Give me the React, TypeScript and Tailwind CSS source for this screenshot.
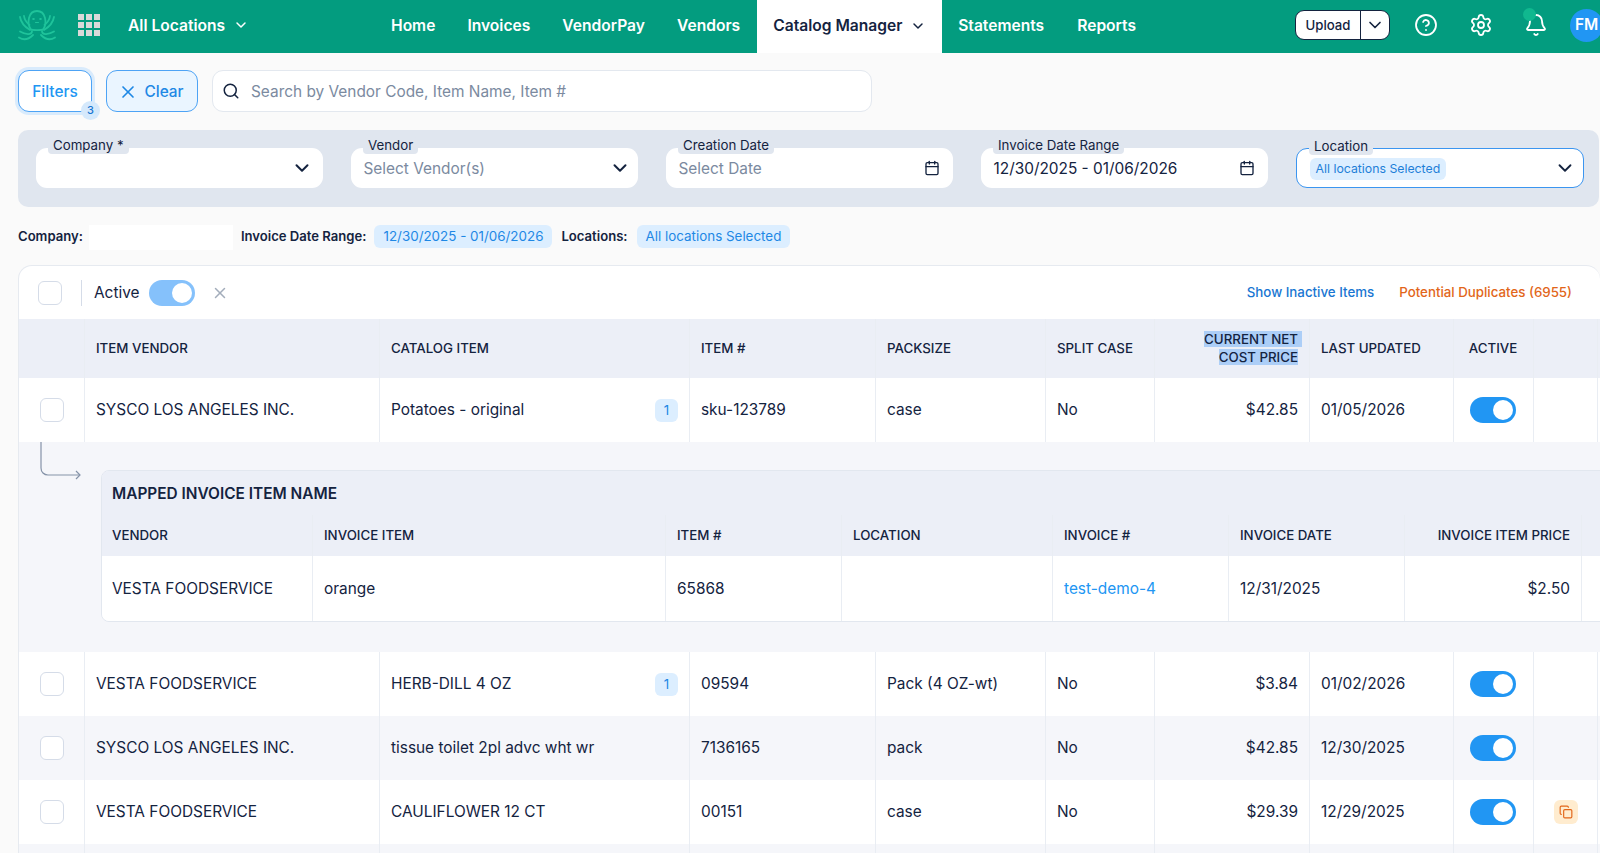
import { Bell, Calendar, ChevronDown, CircleHelp, Copy, Search, Settings, X } from "lucide-react";
import type { ReactNode } from "react";

const navItems = ["Home", "Invoices", "VendorPay", "Vendors"];
const rowGrid = "grid grid-cols-[66px_295px_310px_186px_170px_109px_155px_144px_80px_64px]";
const mappedGrid = "grid grid-cols-[211px_353px_176px_211px_176px_176px_177px_1fr]";
const cell = "flex items-center px-[11px] border-r border-[#E9EDF3]";

function Logo() {
  return (
    <svg width="40" height="32" viewBox="0 0 40 32" fill="none" stroke="#1FC39B" strokeWidth="1.8" strokeLinecap="round">
      <path d="M13.5 20C10 14 11 2 20 2C29 2 30 14 26.5 20C25 21.5 15 21.5 13.5 20Z" />
      <path d="M3 8C4 14 8 18 13 21" />
      <path d="M37 8C36 14 32 18 27 21" />
      <path d="M7 7C7.5 11 10 14 12.5 16" />
      <path d="M33 7C32.5 11 30 14 27.5 16" />
      <path d="M15 22C15 26 9 26 3 22.5" />
      <path d="M25 22C25 26 31 26 37 22.5" />
      <path d="M2 28.5C6 31 11 31 16 26" />
      <path d="M38 28.5C34 31 29 31 24 26" />
      <ellipse cx="16.5" cy="10" rx="1.3" ry="1.1" fill="#1FC39B" stroke="none" />
      <ellipse cx="23.5" cy="10" rx="1.3" ry="1.1" fill="#1FC39B" stroke="none" />
      <path d="M18.5 13.5H21.5" strokeWidth="1" />
    </svg>
  );
}

function AppGrid() {
  return (
    <div className="grid grid-cols-3 gap-[2px] w-[22px]">
      {Array.from({ length: 9 }).map((_, i) => (
        <span key={i} className="h-[6px] w-[6px] bg-[#D9D9D9]" />
      ))}
    </div>
  );
}

function TopBar() {
  return (
    <header className="flex items-center h-[53px] bg-[#039C7F] text-white overflow-hidden">
      <div className="ml-[17px] pb-[3px]">
        <Logo />
      </div>
      <div className="ml-[21px] pb-[3px]">
        <AppGrid />
      </div>
      <div className="flex items-center ml-[28px] pb-[2px] w-[247px] text-[15.6px] font-semibold">
        All Locations
        <ChevronDown size={16} strokeWidth={2.2} className="ml-[8px]" />
      </div>
      <nav className="flex items-center h-full text-[15.6px] font-semibold">
        {navItems.map((item) => (
          <span key={item} className="px-4 pb-[2px]">
            {item}
          </span>
        ))}
        <span className="flex items-center h-full w-[185px] ml-[1px] pl-4 pb-[2px] bg-white text-[#14233F]">
          Catalog Manager
          <ChevronDown size={16} strokeWidth={2.2} className="ml-[8px]" />
        </span>
        <span className="px-4 pb-[2px]">Statements</span>
        <span className="pl-[17px] pr-4 pb-[2px]">Reports</span>
      </nav>
      <div className="ml-auto flex items-center pb-[3px]">
        <div className="flex items-center h-[30px] w-[95px] bg-white border border-[#14233F] rounded-[9px] text-[#14233F]">
          <span className="w-[64px] pt-[1px] text-center text-[13.2px] font-medium">Upload</span>
          <span className="flex items-center justify-center flex-1 h-full border-l border-[#14233F]">
            <ChevronDown size={20} />
          </span>
        </div>
        <CircleHelp size={24} strokeWidth={1.8} className="ml-[24px]" />
        <Settings size={24} strokeWidth={1.8} className="ml-[31px]" />
        <div className="relative ml-[31px]">
          <Bell size={24} strokeWidth={1.8} />
          <span className="absolute -top-[5px] -left-[1px] h-[13px] w-[13px] rounded-full bg-[#10B88F]" />
        </div>
        <span className="flex items-center justify-center shrink-0 ml-[22px] -mr-[3px] h-[33px] w-[33px] rounded-full bg-[#2196F3] text-[15.4px] font-semibold">
          FM
        </span>
      </div>
    </header>
  );
}

function SearchRow() {
  return (
    <div className="flex items-center gap-[14px] pl-[18px] pt-[17px]">
      <button className="relative h-[42px] w-[74px] pt-[1px] rounded-[11px] bg-white border-[1.5px] border-[#4DA3F5] ring-[3px] ring-[#D9EBFC] text-[15.4px] font-medium text-[#2196F3]">
        Filters
        <span className="absolute -bottom-[9px] -right-[9px] flex items-center justify-center h-[19px] w-[19px] rounded-full bg-[#D5E9FC] text-[11px] text-[#1976D2]">
          3
        </span>
      </button>
      <button className="flex items-center justify-center gap-[6px] h-[42px] w-[92px] pt-[1px] pr-[2px] rounded-[11px] bg-[#EAF5FF] border-[1.5px] border-[#4DA3F5] text-[15.4px] font-medium text-[#1E88E5]">
        <X size={20} strokeWidth={2} />
        Clear
      </button>
      <div className="flex items-center gap-[11px] h-[42px] w-[660px] pl-[9px] rounded-[11px] bg-white border border-[#E3E8EF]">
        <Search size={18} className="text-[#14233F]" />
        <span className="pt-[1px] text-[15.4px] text-[#7B8AA0]">Search by Vendor Code, Item Name, Item #</span>
      </div>
    </div>
  );
}

function Field({ label, children, active }: { label: string; children: ReactNode; active?: boolean }) {
  return (
    <div
      className={`relative flex items-center justify-between h-[40px] pl-[12.5px] pr-[13px] rounded-[11px] bg-white ${
        active ? "border border-[#3B95F0]" : ""
      }`}
    >
      <span className="absolute -top-[11px] left-3 h-[17px] px-[5px] rounded-sm bg-[#E0E6EF] text-[13.3px] leading-[17px] text-[#14233F]">
        {label}
      </span>
      {children}
    </div>
  );
}

function FilterPanel() {
  return (
    <div className="grid grid-cols-[287px_287px_287px_287px_288px] gap-[28px] h-[77px] w-[1581px] ml-[18px] mt-[18px] pt-[18px] pl-[18px] rounded-[10px] bg-[#E0E6EF]">
      <Field label="Company *">
        <span />
        <ChevronDown size={22} strokeWidth={2.2} className="-mr-[3px] text-[#14233F]" />
      </Field>
      <Field label="Vendor">
        <span className="pt-[1px] text-[15.4px] text-[#7B8AA0]">Select Vendor(s)</span>
        <ChevronDown size={22} strokeWidth={2.2} className="-mr-[6px] text-[#14233F]" />
      </Field>
      <Field label="Creation Date">
        <span className="pt-[1px] text-[15.4px] text-[#7B8AA0]">Select Date</span>
        <Calendar size={16} className="text-[#14233F]" />
      </Field>
      <Field label="Invoice Date Range">
        <span className="pt-[1px] text-[15.4px] text-[#14233F]">12/30/2025 - 01/06/2026</span>
        <Calendar size={16} className="text-[#14233F]" />
      </Field>
      <Field label="Location" active>
        <span className="h-[22px] mt-[1px] px-[6px] rounded-md bg-[#DCEEFF] text-[12.3px] leading-[22px] text-[#1E7FD8]">
          All locations Selected
        </span>
        <ChevronDown size={22} strokeWidth={2} className="-mr-[6px] text-[#14233F]" />
      </Field>
    </div>
  );
}

function AppliedFilters() {
  const chip = "h-[23px] px-[9px] rounded-md bg-[#DCEEFF] text-[13.4px] leading-[23px] text-[#1E88E5]";
  const name = "text-[13.1px] leading-[23px] font-semibold text-[#14233F]";
  return (
    <div className="flex items-start h-[25px] ml-[18px] mt-[18px]">
      <span className={name}>Company:</span>
      <span className="h-[25px] w-[144px] ml-[6px] mr-[8px] bg-white" />
      <span className={name}>Invoice Date Range:</span>
      <span className={`${chip} ml-[8px] mr-[9px]`}>12/30/2025 - 01/06/2026</span>
      <span className={name}>Locations:</span>
      <span className={`${chip} ml-[9px]`}>All locations Selected</span>
    </div>
  );
}

function Checkbox() {
  return <span className="block h-[24px] w-[24px] rounded-md bg-white border border-[#D5DCE8]" />;
}

function Toggle({ muted }: { muted?: boolean }) {
  return (
    <span
      className={`flex items-center justify-end h-[26px] w-[46px] pr-[3px] rounded-full ${
        muted ? "bg-[#85C1FB]" : "bg-[#2196F3]"
      }`}
    >
      <span className="h-[20px] w-[20px] rounded-full bg-white" />
    </span>
  );
}

function Toolbar() {
  return (
    <div className="flex items-center h-[53px] pl-[19px] pr-[28px]">
      <Checkbox />
      <span className="h-[26px] w-px ml-[19px] bg-[#D5DCE8]" />
      <span className="ml-[12px] text-[15.4px] text-[#14233F]">Active</span>
      <span className="ml-[9px]">
        <Toggle muted />
      </span>
      <X size={18} className="ml-[16px] text-[#A3ADBB]" />
      <span className="ml-auto text-[13.3px] font-medium text-[#1976D2]">Show Inactive Items</span>
      <span className="ml-[25px] text-[13.3px] font-medium text-[#E2661A]">Potential Duplicates (6955)</span>
    </div>
  );
}

function TableHead() {
  const heads = ["ITEM VENDOR", "CATALOG ITEM", "ITEM #", "PACKSIZE", "SPLIT CASE"];
  return (
    <div className={`${rowGrid} h-[59px] bg-[#ECEFF7] text-[13.3px] font-medium text-[#14233F]`}>
      <div className={cell} />
      {heads.map((h) => (
        <div key={h} className={cell}>
          {h}
        </div>
      ))}
      <div className={`${cell} justify-end text-right leading-[18px]`}>
        <div className="pb-[2px]">
          <span className="bg-[#ACCEF7] pr-[4px] -mr-[4px]">CURRENT NET</span>
          <br />
          <span className="bg-[#ACCEF7]">COST PRICE</span>
        </div>
      </div>
      <div className={cell}>LAST UPDATED</div>
      <div className={`${cell} justify-center pr-[12px]`}>ACTIVE</div>
      <div className={cell} />
    </div>
  );
}

type Row = {
  vendor: string;
  item: string;
  badge?: boolean;
  code: string;
  pack: string;
  price: string;
  updated: string;
  shaded?: boolean;
  duplicate?: boolean;
};

function TableRow({ row }: { row: Row }) {
  return (
    <div className={`${rowGrid} h-[64px] text-[15.4px] text-[#14233F] ${row.shaded ? "bg-[#F5F6FA]" : "bg-white"}`}>
      <div className={`${cell} justify-center`}>
        <Checkbox />
      </div>
      <div className={cell}>{row.vendor}</div>
      <div className={`${cell} justify-between pr-[11px]`}>
        {row.item}
        {row.badge && (
          <span className="flex items-center justify-center h-[23px] w-[23px] rounded-md bg-[#DCEEFF] text-[13.4px] text-[#1E88E5]">
            1
          </span>
        )}
      </div>
      <div className={cell}>{row.code}</div>
      <div className={cell}>{row.pack}</div>
      <div className={cell}>No</div>
      <div className={`${cell} justify-end`}>{row.price}</div>
      <div className={cell}>{row.updated}</div>
      <div className={`${cell} justify-center pr-[13px]`}>
        <Toggle />
      </div>
      <div className={`${cell} justify-center`}>
        {row.duplicate && (
          <span className="flex items-center justify-center h-[24px] w-[24px] rounded-md bg-[#FFECCF] text-[#E2661A]">
            <Copy size={14} />
          </span>
        )}
      </div>
    </div>
  );
}

function MappedItems() {
  const heads = ["VENDOR", "INVOICE ITEM", "ITEM #", "LOCATION", "INVOICE #", "INVOICE DATE"];
  return (
    <div className="relative h-[210px] pl-[82px] pt-[28px] bg-[#F5F6FA]">
      <svg className="absolute left-[1px] top-0" width="62" height="38" viewBox="0 0 62 38" fill="none" stroke="#8593A8" strokeWidth="1.2">
        <path d="M21 0V26C21 30 24 33 28 33H60" />
        <path d="M56 29L60 33L56 37" />
      </svg>
      <div className="w-[1520px] rounded-lg overflow-hidden border border-[#E2E7EF] text-[#14233F]">
        <div className="h-[44px] pl-[10px] pt-[11px] bg-[#ECEFF7] text-[15.4px] font-semibold">MAPPED INVOICE ITEM NAME</div>
        <div className={`${mappedGrid} h-[41px] bg-[#ECEFF7] text-[13.3px] font-medium`}>
          {heads.map((h, i) => (
            <div key={h} className={i === 0 ? `${cell} pl-[10px]` : cell}>
              {h}
            </div>
          ))}
          <div className={`${cell} justify-end`}>INVOICE ITEM PRICE</div>
          <div />
        </div>
        <div className={`${mappedGrid} h-[65px] bg-white text-[15.4px]`}>
          <div className={`${cell} pl-[10px]`}>VESTA FOODSERVICE</div>
          <div className={cell}>orange</div>
          <div className={cell}>65868</div>
          <div className={cell} />
          <div className={`${cell} text-[#2196F3]`}>test-demo-4</div>
          <div className={cell}>12/31/2025</div>
          <div className={`${cell} justify-end`}>$2.50</div>
          <div />
        </div>
      </div>
    </div>
  );
}

function BlankRow() {
  return (
    <div className={`${rowGrid} h-[64px] bg-[#F5F6FA]`}>
      {Array.from({ length: 10 }).map((_, i) => (
        <div key={i} className={cell} />
      ))}
    </div>
  );
}

export default function App() {
  return (
    <div className="h-[853px] w-[1600px] overflow-hidden bg-[#FAFAFA] font-['Inter',sans-serif]">
      <TopBar />
      <SearchRow />
      <FilterPanel />
      <AppliedFilters />
      <section className="w-[1582px] ml-[18px] mt-[15px] rounded-t-[14px] overflow-hidden bg-white border-t border-l border-[#E6EAF0]">
        <Toolbar />
        <TableHead />
        <TableRow
          row={{ vendor: "SYSCO LOS ANGELES INC.", item: "Potatoes - original", badge: true, code: "sku-123789", pack: "case", price: "$42.85", updated: "01/05/2026" }}
        />
        <MappedItems />
        <TableRow
          row={{ vendor: "VESTA FOODSERVICE", item: "HERB-DILL 4 OZ", badge: true, code: "09594", pack: "Pack (4 OZ-wt)", price: "$3.84", updated: "01/02/2026" }}
        />
        <TableRow
          row={{ vendor: "SYSCO LOS ANGELES INC.", item: "tissue toilet 2pl advc wht wr", code: "7136165", pack: "pack", price: "$42.85", updated: "12/30/2025", shaded: true }}
        />
        <TableRow
          row={{ vendor: "VESTA FOODSERVICE", item: "CAULIFLOWER 12 CT", code: "00151", pack: "case", price: "$29.39", updated: "12/29/2025", duplicate: true }}
        />
        <BlankRow />
      </section>
    </div>
  );
}
